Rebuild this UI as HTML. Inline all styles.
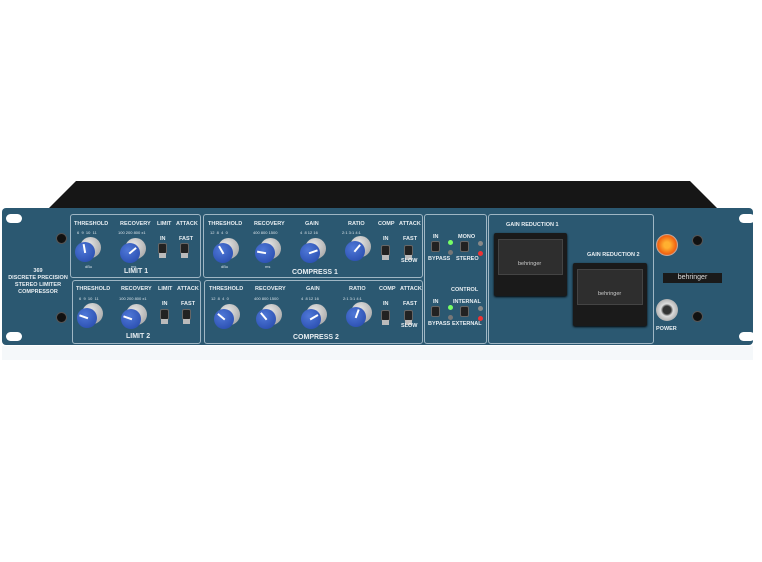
<!DOCTYPE html>
<html><head><meta charset="utf-8"><style>
body{margin:0;width:762px;height:562px;background:#fff;position:relative;overflow:hidden;font-family:"Liberation Sans",sans-serif}
.a{position:absolute}
.panel{left:2px;top:208px;width:751px;height:137px;background:#2b5871;border-radius:4px}
.box{position:absolute;border:1px solid #9fb6c4;border-radius:3px}
.t{position:absolute;color:#e8eef2;font-size:5.5px;font-weight:bold;white-space:nowrap}
.s{position:absolute;color:#d8e2e8;font-size:4px;white-space:nowrap}
.big{font-size:7px}
.k{position:absolute;width:26px;height:26px}
.k .g{position:absolute;left:5px;top:0;width:21px;height:21px;border-radius:50%;background:radial-gradient(circle at 40% 35%,#e8e8e8,#9a9a9a)}
.k .b{position:absolute;left:0;top:5px;width:20px;height:20px;border-radius:50%;background:radial-gradient(circle at 40% 35%,#4f78d8,#2346a8);}
.k .b i{position:absolute;left:9px;top:2px;width:2px;height:9px;background:#fff;transform-origin:1px 8px}
.sw{position:absolute;width:7px;height:9px;background:#222;border-radius:2px;border:1px solid #666}
.sw2{position:absolute;width:7px;height:5px;background:#bbb}
.hole{position:absolute;width:9px;height:9px;border-radius:50%;background:#111;border:1px solid #555}
.ov{position:absolute;width:16px;height:9px;border-radius:5px;background:#fff}
.led{position:absolute;width:5px;height:5px;border-radius:50%}
.m{position:absolute;background:#1a1a1a;border-radius:2px;box-shadow:0 1px 2px #000}
.m .f{position:absolute;left:4px;top:6px;right:4px;height:34px;background:#2e2e2e;border:1px solid #444}
</style></head><body>
<svg class="a" style="left:0;top:0" width="762" height="562"><polygon points="48,209 76,181 690,181 718,209" fill="#161616"/><rect x="2" y="346" width="751" height="14" fill="#f5f8fa"/></svg>
<div class="a panel"></div>
<div class="ov" style="left:6px;top:214px"></div><div class="ov" style="left:6px;top:332px"></div>
<div class="ov" style="left:739px;top:214px"></div><div class="ov" style="left:739px;top:332px"></div>
<div class="hole" style="left:56px;top:233px"></div><div class="hole" style="left:56px;top:312px"></div>
<div class="hole" style="left:692px;top:235px"></div><div class="hole" style="left:692px;top:311px"></div>
<div class="t" style="left:8px;top:268px;width:60px;text-align:center;line-height:7px;font-size:5.5px">369<br>DISCRETE PRECISION<br>STEREO LIMITER<br>COMPRESSOR</div>

<div class="box" style="left:70px;top:214px;width:129px;height:62px"></div>
<div class="box" style="left:72px;top:280px;width:127px;height:62px"></div>
<div class="box" style="left:203px;top:214px;width:218px;height:62px"></div>
<div class="box" style="left:204px;top:280px;width:217px;height:62px"></div>
<div class="box" style="left:424px;top:214px;width:61px;height:128px"></div>
<div class="box" style="left:488px;top:214px;width:164px;height:128px"></div>

<div class="t" style="left:74px;top:221px">THRESHOLD</div><div class="t" style="left:120px;top:221px">RECOVERY</div><div class="t" style="left:157px;top:221px">LIMIT</div><div class="t" style="left:176px;top:221px">ATTACK</div>
<div class="t" style="left:76px;top:286px">THRESHOLD</div><div class="t" style="left:121px;top:286px">RECOVERY</div><div class="t" style="left:158px;top:286px">LIMIT</div><div class="t" style="left:177px;top:286px">ATTACK</div>
<div class="t big" style="left:124px;top:268px">LIMIT 1</div><div class="t big" style="left:126px;top:333px">LIMIT 2</div>
<div class="t" style="left:208px;top:221px">THRESHOLD</div><div class="t" style="left:254px;top:221px">RECOVERY</div><div class="t" style="left:305px;top:221px">GAIN</div><div class="t" style="left:348px;top:221px">RATIO</div><div class="t" style="left:378px;top:221px">COMP</div><div class="t" style="left:399px;top:221px">ATTACK</div>
<div class="t" style="left:209px;top:286px">THRESHOLD</div><div class="t" style="left:255px;top:286px">RECOVERY</div><div class="t" style="left:306px;top:286px">GAIN</div><div class="t" style="left:349px;top:286px">RATIO</div><div class="t" style="left:379px;top:286px">COMP</div><div class="t" style="left:400px;top:286px">ATTACK</div>
<div class="t big" style="left:292px;top:269px">COMPRESS 1</div><div class="t big" style="left:293px;top:334px">COMPRESS 2</div>

<!-- scale labels -->
<div class="s" style="left:77px;top:230px">6 &nbsp;9 &nbsp;10 &nbsp;11</div><div class="s" style="left:118px;top:230px">100 200 800 x1</div>
<div class="s" style="left:79px;top:296px">6 &nbsp;9 &nbsp;10 &nbsp;11</div><div class="s" style="left:119px;top:296px">100 200 800 x1</div>
<div class="s" style="left:210px;top:230px">12 &nbsp;8 &nbsp;4 &nbsp;0</div><div class="s" style="left:253px;top:230px">400 800 1500</div><div class="s" style="left:300px;top:230px">4 &nbsp;8 12 16</div><div class="s" style="left:342px;top:230px">2:1 3:1 4:1</div>
<div class="s" style="left:211px;top:296px">12 &nbsp;8 &nbsp;4 &nbsp;0</div><div class="s" style="left:254px;top:296px">400 800 1500</div><div class="s" style="left:301px;top:296px">4 &nbsp;8 12 16</div><div class="s" style="left:343px;top:296px">2:1 3:1 4:1</div>

<div class="k" style="left:75px;top:237px"><div class="g"></div><div class="b"><i style="transform:rotate(-10deg)"></i></div></div>
<div class="k" style="left:120px;top:238px"><div class="g"></div><div class="b"><i style="transform:rotate(50deg)"></i></div></div>
<div class="k" style="left:213px;top:238px"><div class="g"></div><div class="b"><i style="transform:rotate(-30deg)"></i></div></div>
<div class="k" style="left:255px;top:238px"><div class="g"></div><div class="b"><i style="transform:rotate(-80deg)"></i></div></div>
<div class="k" style="left:300px;top:238px"><div class="g"></div><div class="b"><i style="transform:rotate(70deg)"></i></div></div>
<div class="k" style="left:345px;top:236px"><div class="g"></div><div class="b"><i style="transform:rotate(40deg)"></i></div></div>
<div class="k" style="left:77px;top:303px"><div class="g"></div><div class="b"><i style="transform:rotate(-70deg)"></i></div></div>
<div class="k" style="left:121px;top:304px"><div class="g"></div><div class="b"><i style="transform:rotate(-70deg)"></i></div></div>
<div class="k" style="left:214px;top:304px"><div class="g"></div><div class="b"><i style="transform:rotate(-50deg)"></i></div></div>
<div class="k" style="left:256px;top:304px"><div class="g"></div><div class="b"><i style="transform:rotate(-40deg)"></i></div></div>
<div class="k" style="left:301px;top:304px"><div class="g"></div><div class="b"><i style="transform:rotate(60deg)"></i></div></div>
<div class="k" style="left:346px;top:302px"><div class="g"></div><div class="b"><i style="transform:rotate(20deg)"></i></div></div>
<div class="s" style="left:85px;top:264px">dBu</div><div class="s" style="left:131px;top:264px">ms</div>
<div class="s" style="left:221px;top:264px">dBu</div><div class="s" style="left:265px;top:264px">ms</div>

<div class="sw" style="left:158px;top:243px"></div><div class="sw2" style="left:159px;top:253px"></div>
<div class="sw" style="left:180px;top:243px"></div><div class="sw2" style="left:181px;top:253px"></div>
<div class="sw" style="left:160px;top:309px"></div><div class="sw2" style="left:161px;top:319px"></div>
<div class="sw" style="left:182px;top:309px"></div><div class="sw2" style="left:183px;top:319px"></div>
<div class="sw" style="left:381px;top:245px"></div><div class="sw2" style="left:382px;top:255px"></div>
<div class="sw" style="left:404px;top:245px"></div><div class="sw2" style="left:405px;top:255px"></div>
<div class="sw" style="left:381px;top:310px"></div><div class="sw2" style="left:382px;top:320px"></div>
<div class="sw" style="left:404px;top:310px"></div><div class="sw2" style="left:405px;top:320px"></div>
<div class="t" style="left:160px;top:236px">IN</div><div class="t" style="left:179px;top:236px">FAST</div>
<div class="t" style="left:162px;top:301px">IN</div><div class="t" style="left:181px;top:301px">FAST</div>
<div class="t" style="left:383px;top:236px">IN</div><div class="t" style="left:403px;top:236px">FAST</div>
<div class="t" style="left:383px;top:301px">IN</div><div class="t" style="left:403px;top:301px">FAST</div>
<div class="t" style="left:401px;top:258px">SLOW</div><div class="t" style="left:401px;top:323px">SLOW</div>

<div class="t" style="left:433px;top:234px">IN</div><div class="t" style="left:458px;top:234px">MONO</div>
<div class="sw" style="left:431px;top:241px"></div><div class="sw" style="left:460px;top:241px"></div>
<div class="led" style="left:448px;top:240px;background:#7f6"></div><div class="led" style="left:448px;top:250px;background:#777"></div>
<div class="led" style="left:478px;top:241px;background:#888"></div><div class="led" style="left:478px;top:251px;background:#e33"></div>
<div class="t" style="left:428px;top:256px">BYPASS</div><div class="t" style="left:456px;top:256px">STEREO</div>
<div class="t" style="left:451px;top:287px">CONTROL</div>
<div class="t" style="left:433px;top:299px">IN</div><div class="t" style="left:453px;top:299px">INTERNAL</div>
<div class="sw" style="left:431px;top:306px"></div><div class="sw" style="left:460px;top:306px"></div>
<div class="led" style="left:448px;top:305px;background:#7f6"></div><div class="led" style="left:448px;top:315px;background:#777"></div>
<div class="led" style="left:478px;top:306px;background:#888"></div><div class="led" style="left:478px;top:316px;background:#e33"></div>
<div class="t" style="left:428px;top:321px">BYPASS</div><div class="t" style="left:452px;top:321px">EXTERNAL</div>

<div class="t" style="left:506px;top:222px">GAIN REDUCTION 1</div>
<div class="t" style="left:587px;top:252px">GAIN REDUCTION 2</div>
<div class="m" style="left:494px;top:233px;width:73px;height:63px"><div class="f"></div><div class="t" style="left:24px;top:28px;color:#ccc;font-weight:normal">behringer</div></div>
<div class="m" style="left:573px;top:263px;width:74px;height:63px"><div class="f"></div><div class="t" style="left:25px;top:28px;color:#ccc;font-weight:normal">behringer</div></div>

<div class="a" style="left:656px;top:234px;width:22px;height:22px;border-radius:50%;background:radial-gradient(circle,#ffb030 20%,#f06010 60%,#bbb 70%,#888)"></div>
<div class="a" style="left:663px;top:273px;width:59px;height:10px;background:#1a1a1a;color:#ddd;font-size:7px;text-align:center;line-height:10px">behringer</div>
<div class="a" style="left:656px;top:299px;width:22px;height:22px;border-radius:50%;background:radial-gradient(circle,#333 25%,#ddd 40%,#888)"></div>
<div class="t" style="left:656px;top:326px">POWER</div>
</body></html>
